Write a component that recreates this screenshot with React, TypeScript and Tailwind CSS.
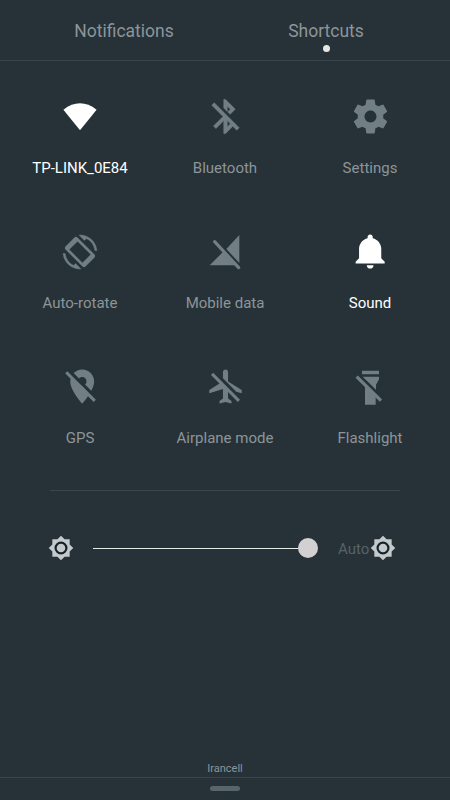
import type { ReactNode } from "react";

interface TileProps {
    label: string;
    active?: boolean;
    children: ReactNode;
}

const Tile = ({ label, active, children }: TileProps) => (
    <button
        className={
            active
                ? "flex h-[135px] flex-col items-center text-white"
                : "flex h-[135px] flex-col items-center text-[#717e84]"
        }
    >
        <span className="flex h-[41px] w-[41px] items-center justify-center">{children}</span>
        <span
            className={
                active
                    ? "mt-[21px] text-[15px] leading-5 whitespace-nowrap text-white"
                    : "mt-[21px] text-[15px] leading-5 whitespace-nowrap text-[#8d9599]"
            }
        >
            {label}
        </span>
    </button>
);

const Icon = ({ d, viewBox = "0 0 24 24" }: { d: string; viewBox?: string }) => (
    <svg width={41} height={41} viewBox={viewBox} fill="currentColor">
        <path d={d} />
    </svg>
);

const WifiIcon = () => (
    <svg width={40} height={40} viewBox="0 0 40 40" fill="currentColor">
        <path d="M3.4 12.7Q20 0 36.6 12.7L20 33.2Z" />
    </svg>
);

const BluetoothOffIcon = () => (
    <svg width={41} height={41} viewBox="0 0 24 24" fill="currentColor" stroke="currentColor" strokeWidth={0.35}>
        <path d="M13 5.83l1.88 1.88-1.6 1.6 1.41 1.41 3.02-3.02L12 2h-1v5.03l2 2v-3.2zM5.41 4L4 5.41 10.59 12 5 17.59 6.41 19 11 14.41V22h1l4.29-4.29 2.3 2.29L20 18.59 5.41 4zM13 18.17v-3.76l1.88 1.88L13 18.17z" />
    </svg>
);

const RotateIcon = () => (
    <svg width={34} height={34} viewBox="0 0 24 24" fill="currentColor" className="overflow-visible">
        <path
            stroke="currentColor"
            strokeWidth={0.3}
            d="M16.48 2.52c3.27 1.55 5.61 4.72 5.97 8.48h1.5C23.44 4.84 18.29 0 12 0l-.66.03 3.81 3.81 1.33-1.32zM7.52 21.48C4.25 19.94 1.91 16.76 1.55 13H.05C.56 19.16 5.71 24 12 24l.66-.03-3.81-3.81-1.33 1.32z"
        />
        <path
            fillRule="evenodd"
            d="M10.23 1.75c-.59-.59-1.54-.59-2.12 0L1.75 8.11c-.59.59-.59 1.54 0 2.12l12.02 12.02c.59.59 1.54.59 2.12 0l6.36-6.36c.59-.59.59-1.54 0-2.12zM10.3 4.5 4.5 10.3 13.7 19.5 19.5 13.7Z"
        />
    </svg>
);

const SignalOffIcon = () => (
    <svg width={40} height={40} viewBox="0 0 120 120" fill="currentColor">
        <path d="M103 9V93L64 51ZM14 100 56 58 95 100Z" />
        <path d="M29 29 101 107" stroke="currentColor" strokeWidth={9.5} strokeLinecap="round" />
    </svg>
);

const FlashlightOffIcon = () => (
    <svg width={40} height={40} viewBox="0 0 120 120" fill="currentColor">
        <path d="M36 11H87V22H36ZM38 29H87V37L78 53V68ZM45 54 77 86V113H45Z" />
        <path d="M20 29 93 101" stroke="currentColor" strokeWidth={10} />
    </svg>
);

const SunIcon = () => (
    <svg width={26} height={26} viewBox="0 0 24 24" className="shrink-0">
        <path
            d="M20 8.69V4h-4.69L12 .69 8.69 4H4v4.69L.69 12 4 15.31V20h4.69L12 23.31 15.31 20H20v-4.69L23.31 12z"
            fill="#c4c9cb"
        />
        <circle cx={12} cy={12} r={5} fill="none" stroke="#13232c" strokeWidth={2} />
    </svg>
);

const gear =
    "M19.43 12.98c.04-.32.07-.64.07-.98s-.03-.66-.07-.98l2.11-1.65c.19-.15.24-.42.12-.64l-2-3.46c-.12-.22-.39-.3-.61-.22l-2.49 1c-.52-.4-1.08-.73-1.69-.98l-.38-2.65C14.46 2.18 14.25 2 14 2h-4c-.25 0-.46.18-.49.42l-.38 2.65c-.61.25-1.17.59-1.69.98l-2.49-1c-.23-.09-.49 0-.61.22l-2 3.46c-.13.22-.07.49.12.64l2.11 1.65c-.04.32-.07.65-.07.98s.03.66.07.98l-2.11 1.65c-.19.15-.24.42-.12.64l2 3.46c.12.22.39.3.61.22l2.49-1c.52.4 1.08.73 1.69.98l.38 2.65c.03.24.24.42.49.42h4c.25 0 .46-.18.49-.42l.38-2.65c.61-.25 1.17-.59 1.69-.98l2.49 1c.23.09.49 0 .61-.22l2-3.46c.12-.22.07-.49-.12-.64l-2.11-1.65zM12 15.5c-1.93 0-3.5-1.57-3.5-3.5s1.57-3.5 3.5-3.5 3.5 1.57 3.5 3.5-1.57 3.5-3.5 3.5z";
const bell =
    "M11.5 22c1.1 0 2-.9 2-2h-4c0 1.1.9 2 2 2zm6.5-6v-5.5c0-3.07-2.13-5.64-5-6.32V3.5c0-.83-.67-1.5-1.5-1.5S10 2.67 10 3.5v.68c-2.87.68-5 3.25-5 6.32V16l-2 2v1h17v-1l-2-2z";
const locationOff =
    "M12 6.5c1.38 0 2.5 1.12 2.5 2.5 0 .74-.33 1.39-.83 1.85l3.63 3.63c.98-1.86 1.7-3.8 1.7-5.48 0-3.87-3.13-7-7-7-1.98 0-3.76.83-5.04 2.15l3.19 3.19c.46-.52 1.11-.84 1.85-.84zm4.37 9.6l-4.63-4.63-.11-.11L3.27 3 2 4.27l3.18 3.18C5.07 7.95 5 8.47 5 9c0 5.25 7 13 7 13s1.67-1.85 3.38-4.35L18.73 21 20 19.73l-3.63-3.63z";
const airplaneOff =
    "M13 9V3.5c0-.83-.67-1.5-1.5-1.5S10 2.67 10 3.5v3.68l7.83 7.83L21 16v-2l-8-5zM3 5.27l4.99 4.99L2 14v2l8-2.5V19l-2 1.5V22l3.5-1 3.5 1v-1.5L13 19v-3.73L18.73 21 20 19.73 4.27 4 3 5.27z";

export default function App() {
    return (
        <div className="flex h-[800px] w-[450px] flex-col overflow-hidden bg-[#263238] font-[Roboto,sans-serif]">
            {/* Tabs */}
            <div className="flex h-[61px] shrink-0 justify-center border-b border-[#39464b] pt-[19px] text-[17.5px] leading-6 text-[#8d9599]">
                <div className="w-[202px] text-center">Notifications</div>
                <div className="flex w-[202px] flex-col items-center">
                    Shortcuts
                    <span className="mt-0.5 h-[7px] w-[7px] rounded-full bg-[#e6e6e6]" />
                </div>
            </div>

            {/* Toggles */}
            <div className="mt-[35px] grid shrink-0 grid-cols-[145px_145px_145px] justify-center">
                <Tile label="TP-LINK_0E84" active>
                    <WifiIcon />
                </Tile>
                <Tile label="Bluetooth">
                    <BluetoothOffIcon />
                </Tile>
                <Tile label="Settings">
                    <Icon d={gear} />
                </Tile>
                <Tile label="Auto-rotate">
                    <RotateIcon />
                </Tile>
                <Tile label="Mobile data">
                    <SignalOffIcon />
                </Tile>
                <Tile label="Sound" active>
                    <Icon d={bell} viewBox="-0.3 0 24 24" />
                </Tile>
                <Tile label="GPS">
                    <Icon d={locationOff} viewBox="-1 0 24 24" />
                </Tile>
                <Tile label="Airplane mode">
                    <Icon d={airplaneOff} viewBox="-0.5 0 24 24" />
                </Tile>
                <Tile label="Flashlight">
                    <FlashlightOffIcon />
                </Tile>
            </div>

            {/* Brightness */}
            <div className="mx-[50px] -mt-[11px] h-px shrink-0 bg-[#39464b]" />
            <div className="mt-11 flex h-[26px] shrink-0 items-center pl-12">
                <SunIcon />
                <div className="ml-[19px] flex w-[225px] items-center">
                    <div className="h-px flex-1 bg-[#e4ebe4]" />
                    <div className="h-5 w-5 rounded-full bg-[#d3d0d1]" />
                </div>
                <span className="ml-5 w-8 pt-0.5 text-[15px] leading-5 text-[#566268]">Auto</span>
                <SunIcon />
            </div>

            {/* Carrier and handle */}
            <div className="mt-auto flex shrink-0 flex-col items-center">
                <span className="text-[11px] leading-4 text-[#8d9599]">Irancell</span>
                <div className="flex h-[23px] w-full justify-center border-t border-[#39464b] pt-2">
                    <div className="h-[5px] w-[30px] rounded-full bg-[#58656b]" />
                </div>
            </div>
        </div>
    );
}
